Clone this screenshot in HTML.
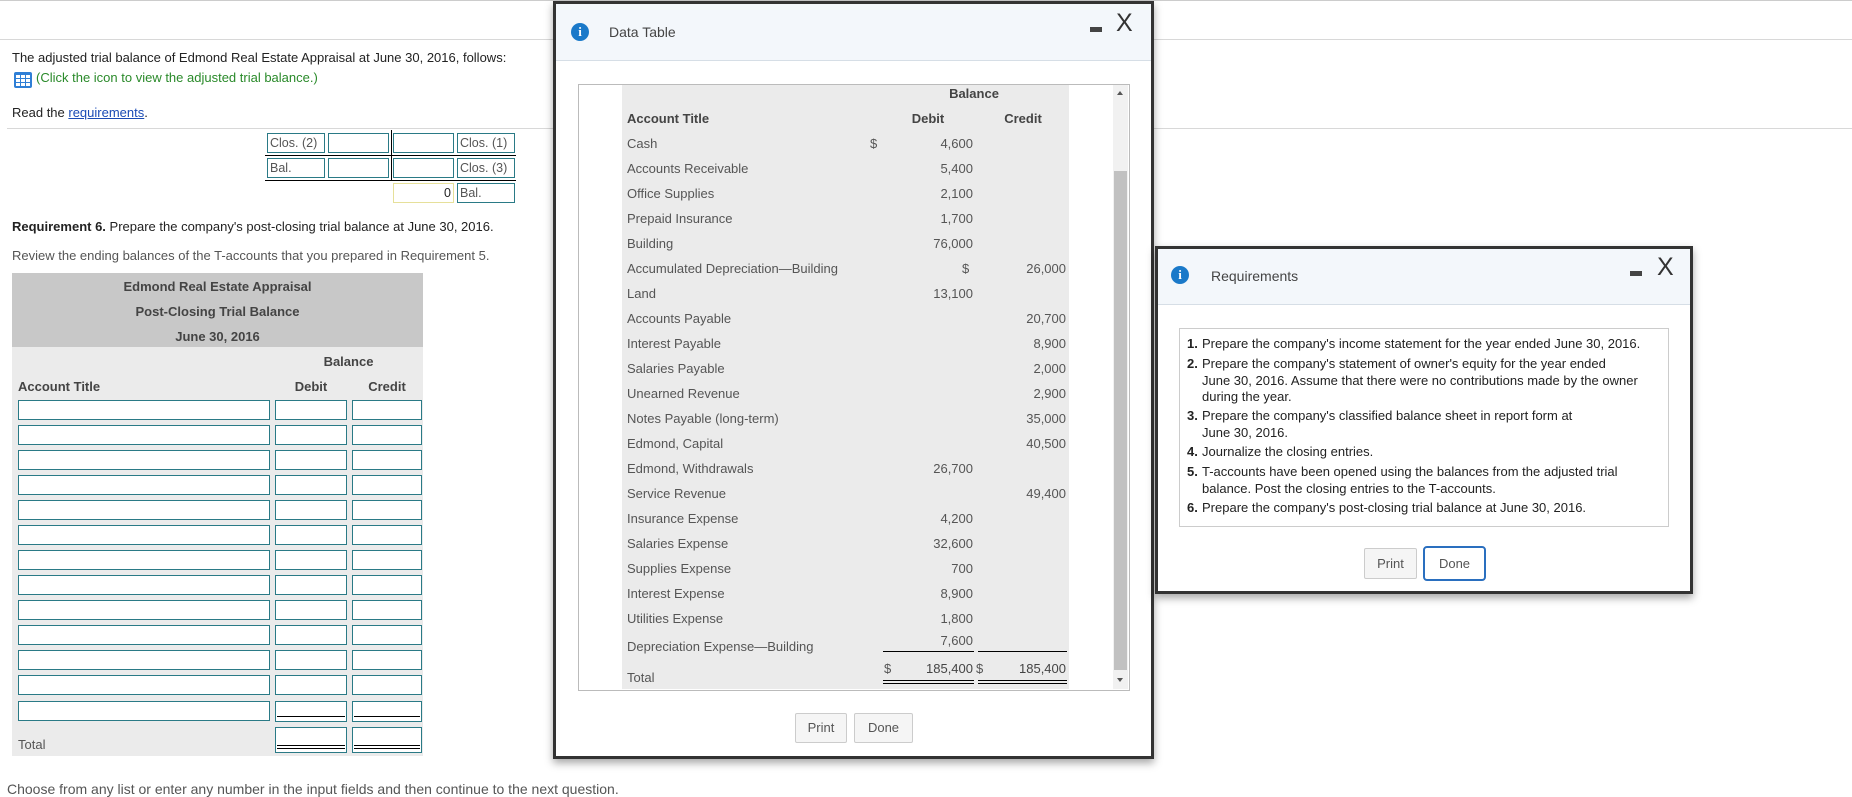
<!DOCTYPE html>
<html><head><meta charset="utf-8"><style>
*{margin:0;padding:0;box-sizing:border-box}
body{width:1852px;height:797px;position:relative;background:#fff;font-family:"Liberation Sans",Arial,sans-serif;font-size:13px;color:#222;overflow:hidden}
.a{position:absolute;white-space:nowrap}
.inp{position:absolute;border:1px solid #2a7a86;background:#fff;height:20px}
.tb{position:absolute;border:1px solid #2a7a86;background:#fff;height:20px;font-size:12.5px;color:#555;padding:1px 2px;line-height:16px;white-space:nowrap;overflow:hidden}
.g{color:#555}
.btn{position:absolute;border:1px solid #ccc;background:#f5f5f5;border-radius:2px;color:#555;font-size:13px;text-align:center}
.icon{position:absolute;width:18px;height:18px;border-radius:50%;background:#1a79c9;color:#fff;font:bold 13px "Liberation Serif",serif;text-align:center;line-height:18px}
.row{position:absolute;left:627px;color:#555;font-size:13px;white-space:nowrap}
.r{position:absolute;text-align:right;color:#555;font-size:13px}
</style></head><body>
<div class="a" style="left:0;top:0;width:1852px;height:1px;background:#ccc"></div>
<div class="a" style="left:0;top:39px;width:1852px;height:1px;background:#d8d8d8"></div>
<div class="a" style="left:7px;top:128px;width:1845px;height:1px;background:#d8d8d8"></div>

<div class="a" style="left:12px;top:50px">The adjusted trial balance of Edmond Real Estate Appraisal at June 30, 2016, follows:</div>
<svg class="a" style="left:14px;top:72px" width="18" height="16"><rect x="0" y="0" width="18" height="16" rx="2" fill="#2f7fd6"/><g fill="#fff"><rect x="2" y="3" width="4" height="3"/><rect x="7" y="3" width="4" height="3"/><rect x="12" y="3" width="4" height="3"/><rect x="2" y="7" width="4" height="3"/><rect x="7" y="7" width="4" height="3"/><rect x="12" y="7" width="4" height="3"/><rect x="2" y="11" width="4" height="3"/><rect x="7" y="11" width="4" height="3"/><rect x="12" y="11" width="4" height="3"/></g></svg>
<div class="a" style="left:36px;top:70px;color:#2a8a2a">(Click the icon to view the adjusted trial balance.)</div>
<div class="a" style="left:12px;top:105px">Read the <span style="color:#1a4bb5;text-decoration:underline">requirements</span>.</div>

<div class="tb" style="left:267px;top:133px;width:58px">Clos. (2)</div>
<div class="inp" style="left:328px;top:133px;width:61px"></div>
<div class="inp" style="left:393px;top:133px;width:61px"></div>
<div class="tb" style="left:457px;top:133px;width:58px">Clos. (1)</div>
<div class="a" style="left:265px;top:155px;width:251px;height:1px;background:#000"></div>
<div class="a" style="left:391px;top:130px;width:1px;height:51px;background:#000"></div>
<div class="tb" style="left:267px;top:158px;width:58px">Bal.</div>
<div class="inp" style="left:328px;top:158px;width:61px"></div>
<div class="inp" style="left:393px;top:158px;width:61px"></div>
<div class="tb" style="left:457px;top:158px;width:58px">Clos. (3)</div>
<div class="a" style="left:265px;top:180px;width:251px;height:1px;background:#000"></div>
<div class="tb" style="left:393px;top:183px;width:61px;border-color:#e6e09a;text-align:right;color:#222">0</div>
<div class="tb" style="left:457px;top:183px;width:58px">Bal.</div>

<div class="a" style="left:12px;top:219px"><b>Requirement 6.</b> Prepare the company's post-closing trial balance at June 30, 2016.</div>
<div class="a g" style="left:12px;top:248px">Review the ending balances of the T-accounts that you prepared in Requirement 5.</div>

<div class="a" style="left:12px;top:273px;width:411px;height:74px;background:#c8c8c8"></div>
<div class="a" style="left:12px;top:347px;width:411px;height:409px;background:#ebebeb"></div>
<div class="a" style="left:12px;top:279px;width:411px;text-align:center;font-weight:bold;color:#444">Edmond Real Estate Appraisal</div>
<div class="a" style="left:12px;top:304px;width:411px;text-align:center;font-weight:bold;color:#444">Post-Closing Trial Balance</div>
<div class="a" style="left:12px;top:329px;width:411px;text-align:center;font-weight:bold;color:#444">June 30, 2016</div>
<div class="a" style="left:275px;top:354px;width:147px;text-align:center;font-weight:bold;color:#444">Balance</div>
<div class="a" style="left:18px;top:379px;font-weight:bold;color:#444">Account Title</div>
<div class="a" style="left:275px;top:379px;width:72px;text-align:center;font-weight:bold;color:#444">Debit</div>
<div class="a" style="left:352px;top:379px;width:70px;text-align:center;font-weight:bold;color:#444">Credit</div>
<div id="rows"></div>
<div class="a" style="left:18px;top:737px;color:#555">Total</div>

<div class="a g" style="left:7px;top:781px;font-size:14px">Choose from any list or enter any number in the input fields and then continue to the next question.</div>

<!-- Data table modal -->
<div class="a" style="left:553px;top:1px;width:601px;height:758px;border:3px solid #333;background:#fff;box-shadow:0 4px 8px rgba(0,0,0,.35)"></div>
<div class="a" style="left:556px;top:4px;width:595px;height:57px;background:#f3f7fb;border-bottom:1px solid #d6dee6"></div>
<div class="icon" style="left:571px;top:23px">i</div>
<div class="a" style="left:609px;top:24px;color:#444;font-size:14px">Data Table</div>
<div class="a" style="left:1090px;top:27px;width:12px;height:5px;background:#444"></div>
<div class="a" style="left:1116px;top:9px;font-size:25px;color:#333;line-height:28px">X</div>
<div class="a" style="left:578px;top:84px;width:552px;height:607px;border:1px solid #bbb"></div>
<div class="a" style="left:622px;top:85px;width:447px;height:604px;background:#ebebeb"></div>
<div class="a" style="left:1113px;top:85px;width:15px;height:604px;background:#f1f1f1"></div>
<div class="a" style="left:1114px;top:171px;width:13px;height:499px;background:#c1c1c1"></div>
<div class="a" style="left:1117px;top:91px;width:0;height:0;border-left:3px solid transparent;border-right:3px solid transparent;border-bottom:4px solid #555"></div>
<div class="a" style="left:1117px;top:678px;width:0;height:0;border-left:3px solid transparent;border-right:3px solid transparent;border-top:4px solid #555"></div>
<div class="a" style="left:934px;top:86px;width:80px;text-align:center;font-weight:bold;color:#444">Balance</div>
<div class="a" style="left:627px;top:111px;font-weight:bold;color:#444">Account Title</div>
<div class="a" style="left:898px;top:111px;width:60px;text-align:center;font-weight:bold;color:#444">Debit</div>
<div class="a" style="left:993px;top:111px;width:60px;text-align:center;font-weight:bold;color:#444">Credit</div>
<div id="dt"></div>
<div class="row" style="top:639px">Depreciation Expense—Building</div>
<div class="r" style="left:883px;top:633px;width:90px">7,600</div>
<div class="a" style="left:883px;top:651px;width:91px;height:1px;background:#000"></div>
<div class="a" style="left:978px;top:651px;width:89px;height:1px;background:#000"></div>
<div class="row" style="top:670px">Total</div>
<div class="a g" style="left:884px;top:661px">$</div>
<div class="r" style="left:883px;top:661px;width:90px;color:#444">185,400</div>
<div class="a g" style="left:976px;top:661px">$</div>
<div class="r" style="left:978px;top:661px;width:88px;color:#444">185,400</div>
<div class="a" style="left:883px;top:680px;width:91px;height:4px;border-top:1px solid #000;border-bottom:1px solid #000"></div>
<div class="a" style="left:978px;top:680px;width:89px;height:4px;border-top:1px solid #000;border-bottom:1px solid #000"></div>
<div class="btn" style="left:795px;top:713px;width:52px;height:30px;line-height:28px">Print</div>
<div class="btn" style="left:854px;top:713px;width:59px;height:30px;line-height:28px">Done</div>

<!-- Requirements modal -->
<div class="a" style="left:1155px;top:246px;width:538px;height:348px;border:3px solid #333;background:#fff;box-shadow:0 4px 8px rgba(0,0,0,.35)"></div>
<div class="a" style="left:1158px;top:249px;width:532px;height:56px;background:#f3f7fb;border-bottom:1px solid #d6dee6"></div>
<div class="icon" style="left:1171px;top:266px">i</div>
<div class="a" style="left:1211px;top:268px;color:#444;font-size:14px">Requirements</div>
<div class="a" style="left:1630px;top:271px;width:12px;height:5px;background:#444"></div>
<div class="a" style="left:1657px;top:253px;font-size:25px;color:#333;line-height:28px">X</div>
<div class="a" style="left:1179px;top:328px;width:490px;height:199px;border:1px solid #ccc"></div>
<div class="a" style="left:1187px;top:336px;font-size:13px;line-height:16.5px;color:#222">
<div style="position:absolute;top:0"><b>1.</b></div><div style="position:absolute;left:15px;top:0;white-space:nowrap">Prepare the company's income statement for the year ended June 30, 2016.</div>
<div style="position:absolute;top:20px"><b>2.</b></div><div style="position:absolute;left:15px;top:20px;white-space:nowrap">Prepare the company's statement of owner's equity for the year ended<br>June 30, 2016. Assume that there were no contributions made by the owner<br>during the year.</div>
<div style="position:absolute;top:72px"><b>3.</b></div><div style="position:absolute;left:15px;top:72px;white-space:nowrap">Prepare the company's classified balance sheet in report form at<br>June 30, 2016.</div>
<div style="position:absolute;top:108px"><b>4.</b></div><div style="position:absolute;left:15px;top:108px;white-space:nowrap">Journalize the closing entries.</div>
<div style="position:absolute;top:128px"><b>5.</b></div><div style="position:absolute;left:15px;top:128px;white-space:nowrap">T-accounts have been opened using the balances from the adjusted trial<br>balance. Post the closing entries to the T-accounts.</div>
<div style="position:absolute;top:164px"><b>6.</b></div><div style="position:absolute;left:15px;top:164px;white-space:nowrap">Prepare the company's post-closing trial balance at June 30, 2016.</div>
</div>
<div class="btn" style="left:1364px;top:548px;width:53px;height:31px;line-height:29px">Print</div>
<div class="btn" style="left:1423px;top:546px;width:63px;height:35px;line-height:31px;border:2px solid #2a6fbf;background:#fff;border-radius:4px">Done</div>

<script>
var h='';for(var i=0;i<13;i++){var t=400+i*25+(i==12?1:0);var hh=(i==12?21:20);h+='<div class="inp" style="left:18px;top:'+t+'px;width:252px"></div><div class="inp" style="left:275px;top:'+t+'px;width:72px;height:'+hh+'px"></div><div class="inp" style="left:352px;top:'+t+'px;width:70px;height:'+hh+'px"></div>';}
h+='<div class="a" style="left:277px;top:716px;width:68px;height:1px;background:#000"></div><div class="a" style="left:354px;top:716px;width:66px;height:1px;background:#000"></div>';
h+='<div class="inp" style="left:275px;top:727px;width:72px;height:26px"></div><div class="inp" style="left:352px;top:727px;width:70px;height:26px"></div>';
h+='<div class="a" style="left:277px;top:745px;width:68px;height:4px;border-top:1px solid #000;border-bottom:1px solid #000"></div><div class="a" style="left:354px;top:745px;width:66px;height:4px;border-top:1px solid #000;border-bottom:1px solid #000"></div>';
document.getElementById('rows').outerHTML=h;
var d=[["Cash","4,600",""],["Accounts Receivable","5,400",""],["Office Supplies","2,100",""],["Prepaid Insurance","1,700",""],["Building","76,000",""],["Accumulated Depreciation—Building","","26,000"],["Land","13,100",""],["Accounts Payable","","20,700"],["Interest Payable","","8,900"],["Salaries Payable","","2,000"],["Unearned Revenue","","2,900"],["Notes Payable (long-term)","","35,000"],["Edmond, Capital","","40,500"],["Edmond, Withdrawals","26,700",""],["Service Revenue","","49,400"],["Insurance Expense","4,200",""],["Salaries Expense","32,600",""],["Supplies Expense","700",""],["Interest Expense","8,900",""],["Utilities Expense","1,800",""]];
var s='';d.forEach(function(r,i){var t=136+i*25;s+='<div class="row" style="top:'+t+'px">'+r[0]+'</div>';if(r[1])s+='<div class="r" style="left:883px;top:'+t+'px;width:90px">'+r[1]+'</div>';if(r[2])s+='<div class="r" style="left:978px;top:'+t+'px;width:88px">'+r[2]+'</div>';});
s+='<div class="a g" style="left:870px;top:136px">$</div><div class="a g" style="left:962px;top:261px">$</div>';
document.getElementById('dt').outerHTML=s;
</script>
</body></html>
